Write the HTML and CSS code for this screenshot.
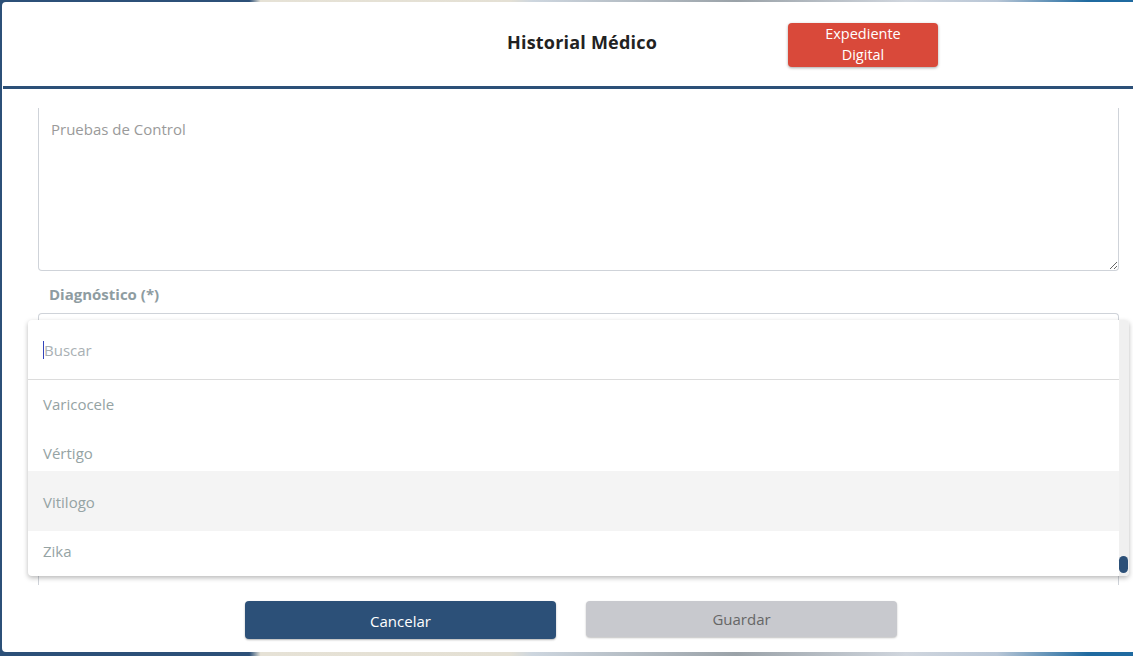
FILE: index.html
```html
<!DOCTYPE html>
<html lang="es">
<head>
<meta charset="utf-8">
<title>Historial Médico</title>
<link rel="stylesheet" href="styles.css">
</head>
<body>
<div class="backdrop">
  <div class="modal">
    <header class="modal-header">
      <span class="spacer"></span>
      <h1 class="title">Historial Médico</h1>
      <div class="header-right">
        <button class="btn-red">Expediente<br>Digital</button>
      </div>
    </header>
    <div class="modal-body">
      <div class="textarea-wrap">
        <textarea class="textarea" placeholder="Pruebas de Control"></textarea>
      </div>
      <label class="label">Diagnóstico (*)</label>
      <div class="select">
        <div class="dropdown">
          <div class="list">
            <div class="search"><span class="caret"></span><span class="search-ph">Buscar</span></div>
            <div class="option o1">Varicocele</div>
            <div class="option o2">Vértigo</div>
            <div class="option o3 hl">Vitilogo</div>
            <div class="option o4">Zika</div>
          </div>
          <div class="scrollbar"><span class="thumb"></span></div>
        </div>
      </div>
    </div>
    <footer class="modal-footer">
      <button class="btn btn-primary">Cancelar</button>
      <button class="btn btn-gray">Guardar</button>
    </footer>
  </div>
</div>
</body>
</html>
```
FILE: styles.css
```css
html, body {
  margin: 0;
  padding: 0;
  height: 100%;
  overflow: hidden;
}
body {
  font-family: "Open Sans", "Liberation Sans", sans-serif;
  background: linear-gradient(90deg, #2c5078 0, #2c5078 22%, #e6e2d6 23%, #e4e0d4 45%, #cdd6df 47%, #9aa2a8 65%, #d0d6de 80%, #b8c6d6 88%, #1f6aa0 96%);
}
.backdrop {
  padding: 2px 0 4px 2px;
  height: 100%;
  box-sizing: border-box;
}
.modal {
  width: 1159px;
  height: 650px;
  background: #fff;
  border-radius: 4px;
  display: flex;
  flex-direction: column;
}
.modal-header {
  height: 84px;
  border-bottom: 3px solid #2c5078;
  display: grid;
  grid-template-columns: 1fr auto 1fr;
  align-items: center;
  margin-left: 1px;
}
.title {
  margin: 0 0 5px 0;
  font-size: 18px;
  font-weight: 700;
  color: #222;
  letter-spacing: 0.2px;
}
.header-right {
  display: flex;
  padding-left: 131px;
}
.btn-red {
  width: 150px;
  height: 44px;
  border: none;
  border-radius: 4px;
  background: #d9493a;
  color: #fff;
  font-family: inherit;
  font-size: 14.5px;
  line-height: 21px;
  padding: 0 0 2px 0;
  box-shadow: 0 1px 3px rgba(0,0,0,0.35);
  margin-top: 1px;
}
.modal-body {
  padding: 19px 0 0 36px;
  flex: 1;
  display: flex;
  flex-direction: column;
}
.textarea-wrap {
  width: 1081px;
}
.textarea {
  display: block;
  box-sizing: border-box;
  width: 1081px;
  height: 163px;
  border: 1px solid #cfd3d9;
  border-top: none;
  border-radius: 0 0 4px 4px;
  padding: 11px 12px;
  font-family: inherit;
  font-size: 15px;
  color: #555;
  resize: vertical;
  outline: none;
}
.textarea::placeholder {
  color: #9a9a9a;
}
.label {
  display: block;
  margin: 13px 0 0 11px;
  font-size: 15px;
  font-weight: 700;
  color: #8e9ca1;
  line-height: 20px;
}
.select {
  position: relative;
  margin-top: 9px;
  width: 1081px;
  height: 272px;
  box-sizing: border-box;
  border: 1px solid #cfd3d9;
  border-bottom: none;
  border-radius: 4px 4px 0 0;
}
.dropdown {
  position: absolute;
  left: -11px;
  top: 6px;
  width: 1101px;
  height: 256px;
  background: #fff;
  border-radius: 4px;
  box-shadow: 0 2px 5px rgba(0,0,0,0.28);
  display: flex;
  overflow: hidden;
}
.list {
  flex: 1;
  display: flex;
  flex-direction: column;
}
.search {
  height: 59px;
  border-bottom: 1px solid #dcdcdc;
  display: flex;
  align-items: center;
  padding-left: 15px;
  font-size: 15px;
}
.caret {
  width: 1px;
  height: 18px;
  background: #3344bb;
}
.search-ph {
  color: #a9b0b4;
}
.option {
  display: flex;
  align-items: center;
  padding-left: 15px;
  font-size: 15px;
  color: #95a3a4;
  box-sizing: border-box;
}
.o1 {
  height: 49px;
  padding-bottom: 1px;
}
.o2 {
  height: 42px;
  padding-top: 6px;
}
.o3 {
  height: 60px;
  padding-top: 1px;
}
.o4 {
  height: 45px;
  padding-bottom: 5px;
}
.option.hl {
  background: #f4f4f4;
}
.scrollbar {
  width: 10px;
  background: #f0f0f0;
  display: flex;
  flex-direction: column;
  justify-content: flex-end;
  padding-bottom: 3px;
}
.thumb {
  display: block;
  width: 9px;
  height: 17px;
  border-radius: 5px;
  background: #2c5078;
}
.modal-footer {
  height: 51px;
  display: flex;
  align-items: flex-start;
  gap: 30px;
  padding-left: 243px;
}
.btn {
  width: 311px;
  border: none;
  border-radius: 4px;
  font-family: inherit;
  font-size: 15px;
  padding: 0;
}
.btn-primary {
  height: 38px;
  background: #2c5078;
  color: #fff;
  box-shadow: 0 1px 2px rgba(0,0,0,0.3);
  padding-top: 2px;
}
.btn-gray {
  height: 36px;
  background: #c8c9ce;
  color: #666;
  box-shadow: 0 1px 2px rgba(0,0,0,0.25);
}
```
